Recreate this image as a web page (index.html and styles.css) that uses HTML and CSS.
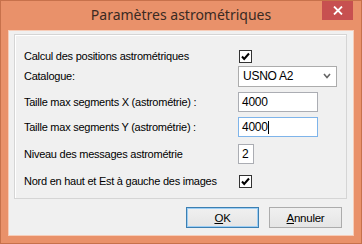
FILE: index.html
```html
<!DOCTYPE html>
<html>

<head>
    <title>Paramètres astrométriques</title>
    <meta charset="utf-8">
    <link rel="stylesheet" href="styles.css">
</head>

<body>
    <div class='window'>
        <div class='titlebar'>
            <span class='title'>Paramètres astrométriques</span>
            <span class='close'>
                <svg width='10' height='9' viewBox='0 0 10 9'>
                    <path d='M1 0.5 L9 8.5 M9 0.5 L1 8.5' stroke='#fff' stroke-width='1.8' fill='none'/>
                </svg>
            </span>
        </div>
        <div class='client'>
            <div class='group'>
                <div class='row'>
                    <label>Calcul des positions astrométriques</label>
                    <span class='check'>
                        <svg width='13' height='13' viewBox='0 0 13 13'>
                            <rect x='0.5' y='0.5' width='12' height='12' fill='#fff' stroke='#333'/>
                            <path d='M3 6.5 L5.2 9 L10 3.5' stroke='#000' stroke-width='2' fill='none'/>
                        </svg>
                    </span>
                </div>
                <div class='row'>
                    <label>Catalogue:</label>
                    <div class='combo'>
                        <span>USNO A2</span>
                        <svg width='8' height='6' viewBox='0 0 8 6'>
                            <path d='M1 1 L4 4.5 L7 1' stroke='#666' stroke-width='1.6' fill='none'/>
                        </svg>
                    </div>
                </div>
                <div class='row'>
                    <label>Taille max segments X (astrométrie) :</label>
                    <div class='edit'>4000</div>
                </div>
                <div class='row'>
                    <label>Taille max segments Y (astrométrie) :</label>
                    <div class='edit focused'>4000<span class='caret'></span></div>
                </div>
                <div class='row'>
                    <label>Niveau des messages astrométrie</label>
                    <div class='edit small'>2</div>
                </div>
                <div class='row'>
                    <label>Nord en haut et Est à gauche des images</label>
                    <span class='check'>
                        <svg width='13' height='13' viewBox='0 0 13 13'>
                            <rect x='0.5' y='0.5' width='12' height='12' fill='#fff' stroke='#333'/>
                            <path d='M3 6.5 L5.2 9 L10 3.5' stroke='#000' stroke-width='2' fill='none'/>
                        </svg>
                    </span>
                </div>
            </div>
            <div class='buttons'>
                <span class='button default'><u>O</u>K</span>
                <span class='button'><u>A</u>nnuler</span>
            </div>
        </div>
    </div>
</body>

</html>
```

FILE: styles.css
```css
* {
    box-sizing: border-box;
}

body {
    margin: 0;
    font-family: "Liberation Sans", Arial, sans-serif;
    font-size: 11px;
    letter-spacing: -0.25px;
    color: #000;
}

.window {
    width: 362px;
    height: 244px;
    display: flex;
    flex-direction: column;
    background-color: #e9916a;
    border: 1px solid #c7714b;
}

.titlebar {
    height: 29px;
    display: grid;
    grid-template-columns: 1fr auto 1fr;
    align-items: start;
}

.title {
    grid-column: 2;
    font-family: "Noto Sans", sans-serif;
    font-size: 14px;
    letter-spacing: 0;
    line-height: 27px;
    color: #3a2a22;
}

.close {
    grid-column: 3;
    justify-self: end;
    width: 31px;
    height: 19px;
    margin-right: 8px;
    display: flex;
    align-items: center;
    justify-content: center;
    background-color: #c75050;
}

.client {
    flex: 1;
    margin: 0 7px 7px 7px;
    padding: 3px 0 0 5px;
    background-color: #f0f0f0;
    border: 1px solid #f7cdb9;
}

.group {
    width: 333px;
    height: 165px;
    padding: 11px 0 0 9px;
    display: grid;
    grid-template-rows: 20px 26px 25px 27px 27px 20px;
    border: 1px solid #d5d5d5;
    box-shadow: inset 1px 1px #fff;
}

.row {
    height: 20px;
    display: flex;
    align-items: center;
}

.row label {
    width: 214px;
}

.check {
    display: flex;
    margin-left: 1px;
}

.combo {
    width: 99px;
    height: 21px;
    display: flex;
    align-items: center;
    justify-content: space-between;
    padding: 0 5px 0 4px;
    background-color: #fff;
    border: 1px solid #acacac;
    font-size: 12px;
}

.edit {
    width: 80px;
    height: 20px;
    display: flex;
    align-items: center;
    padding-left: 3px;
    background-color: #fff;
    border: 1px solid #abadb3;
    font-size: 12px;
}

.edit.focused {
    border-color: #7eb4ea;
}

.edit.small {
    width: 16px;
}

.caret {
    width: 1px;
    height: 13px;
    background-color: #000;
}

.buttons {
    display: flex;
    justify-content: flex-end;
    gap: 10px;
    margin-top: 8px;
    padding-right: 11px;
}

.button {
    width: 73px;
    height: 21px;
    display: flex;
    align-items: center;
    justify-content: center;
    background: linear-gradient(#f0f0f0, #e5e5e5);
    border: 1px solid #acacac;
    font-size: 11.5px;
}

.button.default {
    border-color: #3c7fb1;
    box-shadow: inset 0 0 0 1px #9ccef5;
}
```
